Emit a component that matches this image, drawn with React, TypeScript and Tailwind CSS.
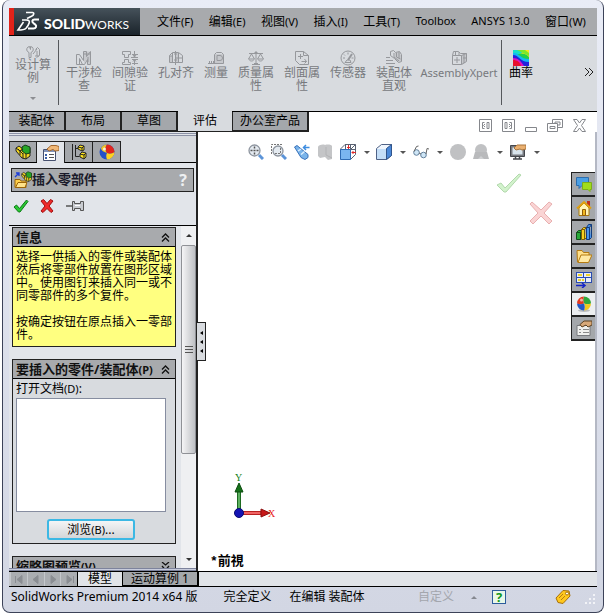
import React from 'react';

const ui = "font-['Noto_Sans','Noto_Sans_CJK_SC',sans-serif]";

type IconProps = { children: React.ReactNode; w?: number; h?: number; className?: string };

function Icon({ children, w = 16, h = 16, className = '' }: IconProps) {
  return (
    <svg width={w} height={h} viewBox={`0 0 ${w} ${h}`} fill="none" className={`shrink-0 ${className}`} aria-hidden="true">
      {children}
    </svg>
  );
}

function Accel({ k }: { k: string }) {
  return <span className="text-[11px]">({k})</span>;
}

const menus = [
  { label: '文件', k: 'F' },
  { label: '编辑', k: 'E' },
  { label: '视图', k: 'V' },
  { label: '插入', k: 'I' },
  { label: '工具', k: 'T' },
  { label: 'Toolbox' },
  { label: 'ANSYS 13.0' },
  { label: '窗口', k: 'W' },
];

function Logo() {
  return (
    <div className="flex w-[131px] shrink-0 items-center border-l-[5px] border-[#e2231a] bg-linear-to-b from-[#46525b] to-[#1b242b]">
      <svg width="126" height="27" viewBox="0 0 126 27" fill="none" role="img" aria-label="SolidWorks">
        <path d="M12 4.500h6.500c2 0 1.500 2.800-.5 3.500l-5 2.500M8 12h4.500c5 0 2.500 4.500-.5 8.200-1.200 1.200-4.500 1.800-8 1.800l5.500-8" stroke="#fff" strokeWidth="1.600" />
        <path d="M25 11.500h-4.500c-2.500 0-2.800 2.300-1.200 3.500l2 1.600c1.700 1.500.7 3.800-1.800 3.800H14" stroke="#fff" strokeWidth="2" />
        <text x="30" y="21" fill="#fff" fontSize="14" fontFamily="Lato, sans-serif" fontWeight="900">SOLID</text>
        <text x="71" y="21" fill="#fff" fontSize="12" fontFamily="Lato, sans-serif">WORKS</text>
      </svg>
    </div>
  );
}

function MenuBar() {
  return (
    <header className="flex h-7 border-b border-black bg-[#a8aaad]">
      <Logo />
      <nav className="flex flex-1 items-center justify-between pr-[11px] pl-[17px] text-xs">
        {menus.map((m) => (
          <button key={m.label} className={`whitespace-nowrap ${m.k ? '' : 'text-[11px]'}`}>
            {m.label}
            {m.k && <Accel k={m.k} />}
          </button>
        ))}
      </nav>
    </header>
  );
}

const g = '#96989c';
const f = '#c6c8cc';

const tools = [
  {
    label: '干涉检查',
    width: 'w-[46px]',
    icon: (
      <>
        <path d="M8 1.500h6v13h-3v-5l-3 4z" fill={f} />
        <path d="M.5 4.500h3l4 6v-9h3v5l4-5v13h-3v-5l-3 5h-2M.5 4.500v10h3v-6l3 6M1 14.500h6M8 4h7M12 7v5" stroke={g} />
      </>
    ),
  },
  {
    label: '间隙验证',
    width: 'w-[46px]',
    icon: <path d="M.5 1.500h8v3h-2v3h-4v-3h-2zM2.500 9.500h4v3h2v2h-8v-2h2zM9 7.500h7M10 9.500h6M12.500 1v6M11 5l1.500 2L14 5M12.500 15V9M11 11.500l1.500-2 1.500 2M10 4.500h6M10 13.500h6" stroke={g} />,
  },
  {
    label: '孔对齐',
    width: 'w-[46px]',
    icon: (
      <>
        <path d="M2 6h3v7H2zM8 3h3v10H8z" fill={f} />
        <path d="M1.500 12.500v-7l3-3h6l4 3v7zM4.500 3v9M7.500 1v14M10.500 3v9M1.500 6h3M7.500 8h7M6 4h3M6 10h3" stroke={g} />
      </>
    ),
  },
  {
    label: '测量',
    width: 'w-[34px]',
    icon: (
      <>
        <path d="M7 4h8v9H7z" fill={f} />
        <path d="M6.500 13.500v-9l2-2h5l2 2v9zM0 13.500h7M1.500 11v2M3.500 11v2M5.500 11v2M9 5.500h3a1.500 1.500 0 0 1 0 5H9z" stroke={g} />
      </>
    ),
  },
  {
    label: '质量属性',
    width: 'w-[46px]',
    icon: <path d="M8 1v13M1 3.500h14M3.500 4l-3 5h6zM12.500 4l-3 5h6zM4 14.500h8M1 9.500c1 2 4 2 5 0M10 9.500c1 2 4 2 5 0M6.500 2.500h3M6 13.500h4" stroke={g} />,
  },
  {
    label: '剖面属性',
    width: 'w-[46px]',
    icon: <path d="M1.500 1.500h8l5 4v9h-9l-4-4zM9.500 1.500v4h5M4 6.500h5M6.500 4v5M7.500 11.500h5M10.500 9l2 2.500-2 2" stroke={g} />,
  },
  {
    label: '传感器',
    width: 'w-[46px]',
    icon: (
      <>
        <circle cx="8" cy="8" r="7" stroke={g} />
        <path d="M8 10l4-6" stroke={g} strokeWidth="2" />
        <path d="M3 8h2M8 2.500v2M4 4.500l1 1M11.500 8h2M5 12.500l2-2.500h3l1 2.500z" stroke={g} />
      </>
    ),
  },
  {
    label: '装配体直观',
    width: 'w-[46px]',
    icon: (
      <>
        <path d="M9 3l4-1 2 3v6l-3 1-3-4z" fill={f} />
        <path d="M4.500 1.500l3-1 2 2 4-1 2 3v7l-3 1-4-4-4-3zM8 3v4l5 4M10.500 3v4l4 2M13 2v6M0 7.500h4M0 10.500h7M0 13.500h9" stroke={g} />
      </>
    ),
  },
  {
    label: 'AssemblyXpert',
    width: 'w-[84px]',
    icon: (
      <>
        <path d="M11 5l4-1v8l-4 3z" fill={f} />
        <path d="M1.500 5.500h9v9h-9zM1.500 5.500l1-4h5l2 2h6v8l-5 3M8 2v3M10.500 5.500l5-2M12 8h3M6 7v6M3 10h6M4.500 2v3M13 5v8" stroke={g} />
      </>
    ),
  },
];

function Ribbon() {
  return (
    <section className="flex h-[75px] bg-[#d8dbdf] text-xs leading-[13px] text-[#77797d]">
      <button className="flex w-[49px] flex-col items-center pt-[9px] pr-px">
        <Icon h={13}>
          <path d="M4.500 1.500a3 3 0 0 0-2 5l1.500 1v5h2v-5l1.500-1a3 3 0 0 0-2-5v3zM10.500 4.500l2-2 2 2v6l-3 2M8 9l4-5M10 11h4M12 6v5" stroke={g} />
        </Icon>
        <span className="w-9">设计算例</span>
        <span className="mt-[13px] border-x-[3px] border-t-[3px] border-x-transparent border-t-[#8c8e92]" />
      </button>
      <div className="mt-1 h-[65px] w-px bg-[#55585c]" />
      <div className="flex flex-1 pl-0.5">
        {tools.map((t) => (
          <button key={t.label} className={`flex shrink-0 flex-col items-center pt-[14px] ${t.width}`}>
            <Icon>{t.icon}</Icon>
            <span className={t.label === 'AssemblyXpert' ? 'text-[11px]' : 'max-w-9'}>{t.label}</span>
          </button>
        ))}
        <div className="mt-1 h-[65px] w-px shrink-0 bg-[#55585c]" />
        <button className="flex w-[38px] shrink-0 flex-col items-center pt-[14px] text-black">
          <Icon>
            <path d="M0 0h16v16H0z" fill="#22d04a" />
            <path d="M0 0h16v7C11 1 7 6 0 0z" fill="#ffe81a" />
            <path d="M0 0h10c0 3-3 5-10 4z" fill="#18e0c8" />
            <path d="M4 0h8l4 3v3L8 2z" fill="#7de82c" />
            <path d="M0 3c6-1 7 6 16 6v4C7 13 7 6 0 7z" fill="#12b8f4" />
            <path d="M0 5c6 0 7 7 16 7v4H9C8 11 5 8 0 9z" fill="#2422dc" />
            <path d="M0 8c5 0 8 3 11 8H7C6 13 4 11 0 11z" fill="#e010c0" />
            <path d="M0 10c4 0 7 2 8 6H0z" fill="#e8102c" />
          </Icon>
          <span>曲率</span>
        </button>
        <button className="mr-0.5 mb-2 ml-auto pt-1" aria-label="更多">
          <Icon w={12}>
            <path d="M2 4l4 4-4 4M6 4l4 4-4 4" stroke="#222" />
          </Icon>
        </button>
      </div>
    </section>
  );
}

function TabRow() {
  const tab = 'h-5 border-r-2 border-b-2 border-[#222] bg-[#a4a7ab]';
  return (
    <div className="flex h-[21px] justify-between border-t border-black bg-white text-xs leading-4">
      <div className="flex">
        <button className={`w-[57px] ${tab}`}>装配体</button>
        <button className={`w-14 ${tab}`}>布局</button>
        <button className={`w-14 ${tab}`}>草图</button>
        <button className="-mt-px h-[22px] w-[54px] border-b-2 border-[#222] bg-[#d8dbdf]">评估</button>
        <button className={`w-[77px] border-l ${tab}`}>办公室产品</button>
      </div>
      <div className="flex items-end gap-[10px] pr-[11px]">
        <button aria-label="展开左侧">
          <Icon w={13} h={13}>
            <path d="M.5.5h12v12H.5zM5.500 3.500h-2v6h2M8 3.500h2v6H8zM6 5L4.500 6.500 6 8" stroke="#85878c" />
          </Icon>
        </button>
        <button aria-label="展开右侧">
          <Icon w={13} h={13}>
            <path d="M.5.5h12v12H.5zM3 3.500h2v6H3zM7.500 3.500h2v6h-2M7 5l1.500 1.500L7 8" stroke="#85878c" />
          </Icon>
        </button>
        <button aria-label="最小化">
          <Icon w={12} h={13}>
            <path d="M.5 8.500h11v4H.5z" stroke="#85878c" />
          </Icon>
        </button>
        <button aria-label="还原">
          <Icon w={16} h={13}>
            <path d="M.5 4.500h10v8H.5zM3 7.500h5v2H3zM5.500 4V.5h10v8H11M8 4V3h5v3h-2" stroke="#85878c" />
          </Icon>
        </button>
        <button aria-label="关闭">
          <Icon w={13} h={13}>
            <path d="M.5.5H4l2.500 3.500L9 .5h3.500L8.500 6.500l4 6H9L6.500 9 4 12.500H.5l4-6z" stroke="#85878c" />
          </Icon>
        </button>
      </div>
    </div>
  );
}

function PartIcon() {
  return (
    <>
      <path d="M1 4l3-2 4 3 2-2 5 1v8l-4 3-4-1-6-7z" fill="#f4d820" stroke="#222" />
      <path d="M7 3l3-2 5 2v6l-4 1-4-3z" fill="#27a527" stroke="#153d15" />
      <path d="M1 4l4 3v4M5 7l3-2M8 9v5M11 10v5M3 5l5 5" stroke="#222" />
    </>
  );
}

function Chevrons({ down = false }: { down?: boolean }) {
  return (
    <Icon w={9} h={9}>
      {down ? <path d="M1 0l3.500 3L8 0M1 4l3.500 4L8 4" stroke="#111" strokeWidth="1.300" /> : <path d="M1 4.500L4.500 1 8 4.500M1 8.500L4.500 5 8 8.500" stroke="#111" strokeWidth="1.300" />}
    </Icon>
  );
}

function GroupHeader({ title, k, down }: { title: string; k?: string; down?: boolean }) {
  return (
    <button className="flex h-[19px] w-full shrink-0 items-center justify-between border-b border-black bg-[#a8aaad] pr-[5px] pl-[3px] text-left text-[13px] leading-[18px] font-bold text-[#111]">
      <span>
        {title}
        {k && <span className="text-[11px]">({k})</span>}
      </span>
      <Chevrons down={down} />
    </button>
  );
}

function PropertyManager() {
  const tab = 'flex h-[21px] w-7 items-center justify-center border-t border-r border-[#222]';
  return (
    <aside className="relative z-10 flex w-[189px] shrink-0 flex-col border-r-2 border-[#222] bg-[#e2e5ea]">
      <div className="mt-px h-[3px] border-y border-[#8c92a6] bg-[#e2e5ea]" />
      <div className="flex h-[27px] items-end border-b border-black bg-[#d8dbdf]">
        <button className={`${tab} border-l bg-[#a4a7ab]`} aria-label="设计树">
          <Icon>
            <PartIcon />
          </Icon>
        </button>
        <button className={`${tab} -mb-px h-[22px] bg-[#e2e5ea]`} aria-label="属性">
          <Icon>
            <path d="M.5 4.500h12v11H.5z" fill="#fff" stroke="#46506e" />
            <path d="M1 5h11v2H1z" fill="#8092b8" />
            <path d="M2 9h2v2H2zM2 12h2v2H2z" fill="#3a60a8" />
            <path d="M6 9.500h5M6 12.500h5" stroke="#555" />
            <path d="M4 4l4-3.500h5l3 1v4l-4 .5-2-1.500-4 1.500z" fill="#f0b878" stroke="#a46a30" />
          </Icon>
        </button>
        <button className={`${tab} bg-[#a4a7ab]`} aria-label="配置">
          <Icon>
            <path d="M1.500 0v16M4.500 1v11.500M4.500 4.500H8M4.500 12.500h4" stroke="#222" />
            <path d="M7 3l2-2 4 1v4l-2 1-4-2z" fill="#ffe420" stroke="#222" />
            <path d="M9 10l2-2 4 1v4l-2 2-4-2z" fill="#ffe420" stroke="#222" />
            <path d="M7 3l4 1v3M11 4l2-2M9 10l4 1v4M13 11l2-2" stroke="#222" />
          </Icon>
        </button>
        <button className={`${tab} bg-[#a4a7ab]`} aria-label="外观">
          <Icon>
            <circle cx="8" cy="8" r="7.500" fill="#2450c8" />
            <path d="M8 9C4 8 2 6 2 4a7.500 7.500 0 0 1 6-3.500C6 3 6 6 8 9z" fill="#f0c428" />
            <path d="M8 9C6 6 6 3 8 .5A7.500 7.500 0 0 1 15.500 8C13 10 10 10 8 9z" fill="#e0261c" />
            <path d="M8 9c2 1 5 1 7.500-1A7.500 7.500 0 0 1 8 15.500C7 13 7 11 8 9z" fill="#ffd21f" />
            <circle cx="5.500" cy="5" r="1.500" fill="#fff" opacity=".8" />
          </Icon>
        </button>
      </div>

      <div className="mx-0.5 mt-[5px] flex h-6 items-center border border-[#222] bg-[#a8aaad] pr-1.5 pl-0.5">
        <Icon w={18} h={18}>
          <g transform="translate(7 0) scale(.7)">
            <PartIcon />
          </g>
          <path d="M1 6l4-4M2 2h3v3" stroke="#1f3fd8" strokeWidth="1.300" />
          <path d="M1 8.500h5l1 1.500h5v6.500H1z" fill="#ffcf4a" stroke="#9a6408" />
          <path d="M1.500 16.500L4 11.500h9l-2 5z" fill="#ffe28a" stroke="#9a6408" />
        </Icon>
        <h2 className="flex-1 text-[13px] font-bold text-[#1b1b2a]">插入零部件</h2>
        <button className="font-['Open_Sans',sans-serif] text-base leading-4 font-bold text-[#eef0f2]" aria-label="帮助">
          ?
        </button>
      </div>

      <div className="flex h-[34px] items-center gap-[10px] border-b border-black pb-1.5 pl-1">
        <button aria-label="确定">
          <Icon>
            <path d="M1 9l2.500-2 3 3.500L13.500 2l1.500 1.500L7 14H5.500z" fill="#2ac832" stroke="#0d7a16" />
          </Icon>
        </button>
        <button aria-label="取消">
          <Icon>
            <path d="M2 3l2.500-1.500L8 5.500l3.500-4L14 3l-4 5 4 5-2 1.500-4-4-4 4L2 13l4-5z" fill="#f02a2a" stroke="#a00c0c" />
          </Icon>
        </button>
        <button aria-label="保持可见">
          <Icon w={20}>
            <path d="M1 8h7" stroke="#555" strokeWidth="1.500" />
            <path d="M7.500 3.500h2v2h6v-2h3v9h-3v-2h-6v2h-2z" fill="#c8cbd0" stroke="#555" />
            <path d="M10 7.500h5" stroke="#fff" />
          </Icon>
        </button>
      </div>

      <div className="flex min-h-0 flex-1">
        <div className="mt-px flex min-w-0 flex-1 flex-col gap-3 overflow-hidden pl-[3px]">
          <section className="shrink-0 border border-[#222] bg-[#ffff80]">
            <GroupHeader title="信息" />
            <div className="space-y-[13px] pt-[3px] pb-[5px] pl-[3px] text-xs leading-[13px]">
              <p>选择一供插入的零件或装配体然后将零部件放置在图形区域中。使用图钉来插入同一或不同零部件的多个复件。</p>
              <p>按确定按钮在原点插入一零部件。</p>
            </div>
          </section>

          <section className="flex shrink-0 flex-col border border-[#222] bg-[#d8dbdf]">
            <GroupHeader title="要插入的零件/装配体" k="P" />
            <label htmlFor="open-docs" className="h-[19px] pl-[3px] text-xs leading-[19px]">
              打开文档
              <Accel k="D" />:
            </label>
            <select id="open-docs" size={6} className="ml-[3px] h-[114px] w-[150px] appearance-none border border-[#868da0] bg-white" />
            <button className="mt-[7px] mb-[3px] ml-[34px] h-[21px] w-[88px] rounded-[3px] border-2 border-[#3cb8e4] bg-linear-to-b from-[#f4f5f6] to-[#d4d6d9] text-xs leading-[17px]">
              浏览
              <Accel k="B" />
              ...
            </button>
          </section>

          <section className="shrink-0 border border-[#222] bg-[#d8dbdf]">
            <GroupHeader title="缩略图预览" k="V" down />
          </section>
        </div>
        <div className="ml-[5px] flex w-[15px] shrink-0 flex-col items-center bg-[#eff0f2]">
          <button className="flex h-[19px] items-center" aria-label="向上滚动">
            <span className="border-x-[3px] border-b-[3px] border-x-transparent border-b-[#333]" />
          </button>
          <div className="flex h-[209px] w-full flex-col items-center justify-center gap-0.5 rounded-xs border border-[#8f9196] bg-linear-to-r from-[#f5f5f6] to-[#bfc1c5]">
            <span className="h-px w-2 bg-[#555]" />
            <span className="h-px w-2 bg-[#555]" />
            <span className="h-px w-2 bg-[#555]" />
          </div>
          <button className="mt-auto flex h-[18px] items-center" aria-label="向下滚动">
            <span className="border-x-[3px] border-t-[3px] border-x-transparent border-t-[#333]" />
          </button>
        </div>
      </div>
      <div className="h-[3px] border-y border-[#7d839c] bg-[#c8ccdc]" />

      {/* 折叠手柄 */}
      <button className="absolute top-[190px] -right-[10px] flex h-[39px] w-[9px] flex-col items-center justify-center gap-[5px] border border-l-0 border-[#222] bg-[#d8dbdf]" aria-label="折叠面板">
        <span className="border-y-[2px] border-r-[3px] border-y-transparent border-r-black" />
        <span className="border-y-[2px] border-r-[3px] border-y-transparent border-r-black" />
        <span className="border-y-[2px] border-r-[3px] border-y-transparent border-r-black" />
      </button>
    </aside>
  );
}

function Caret() {
  return <span className="border-x-[3px] border-t-[3px] border-x-transparent border-t-[#555]" />;
}

function ViewToolbar() {
  return (
    <div className="flex items-center justify-between pt-3 pr-[55px] pl-[50px]">
      <button aria-label="整屏显示全图">
        <Icon>
          <circle cx="6.500" cy="6.500" r="5.500" fill="#e4eaf0" stroke="#8e959f" strokeWidth="1.300" />
          <path d="M6.500 2.500v2M6.500 8.500v2M2.500 6.500h2M8.500 6.500h2M5.500 6.500h2" stroke="#555" strokeWidth="1.500" />
          <path d="M11 11l4 4" stroke="#5c94d8" strokeWidth="3" />
        </Icon>
      </button>
      <button aria-label="局部放大">
        <Icon>
          <path d="M.5 10V.5H11" stroke="#777" strokeDasharray="2 1" />
          <circle cx="7" cy="7" r="5" fill="#e4eaf0" stroke="#8e959f" strokeWidth="1.300" />
          <path d="M4 9.500h5.500V4" stroke="#777" strokeDasharray="2 1" />
          <path d="M11 11l4 4" stroke="#5c94d8" strokeWidth="3" />
        </Icon>
      </button>
      <button aria-label="上一视图">
        <Icon>
          <path d="M.5 3L3 1.500l11 9v3L11 15.500l-4-2z" fill="#7ab4ea" stroke="#3a72ba" />
          <path d="M4 7l3-2M7 10.500l3.500-3" stroke="#dff0ff" strokeWidth="1.500" />
          <path d="M15.500 3.500H10M12 1L9.500 3.500 12 6" stroke="#3d8ce0" strokeWidth="1.500" />
        </Icon>
      </button>
      <button aria-label="剖面视图">
        <Icon>
          <path d="M1 3c0-2 5-3 7-2 3-1 7 0 7 1v13l-4 1-3-3-5 1-2-2z" fill="#c4c5c7" />
          <path d="M9 3v8l6 3" stroke="#b2b3b5" />
        </Icon>
      </button>
      <button className="flex items-center gap-[8px]" aria-label="视图定向">
        <Icon>
          <path d="M5 .5h10.500v10L11 15H.5V5z" fill="#fff" stroke="#5a6272" />
          <path d="M.5 5.500h10v10H.5z" fill="#7ab6f0" stroke="#2f6cb4" />
          <path d="M10.500 5.500l5-5M5.500 0v5M10.500.5v5M11 5.500h5" stroke="#5a6272" />
          <path d="M8.500 1v4M7 3.500h3M12 8.500h4M13.500 7l-1.500 1.500 1.500 1.500" stroke="#e02a2a" />
        </Icon>
        <Caret />
      </button>
      <button className="flex items-center gap-[8px]" aria-label="显示样式">
        <Icon>
          <path d="M.5 4.500l5-4h10v11l-5 4H.5z" fill="#f0f6fd" stroke="#4f6286" />
          <path d="M10.500 4.500l5-4v11l-5 4z" fill="#4a88d8" stroke="#31558c" />
          <path d="M1 5h9v10H1z" fill="#c4def8" />
        </Icon>
        <Caret />
      </button>
      <button className="flex items-center gap-[8px]" aria-label="隐藏/显示项目">
        <Icon>
          <circle cx="3.500" cy="8.500" r="2.800" fill="#cfe6f6" stroke="#63809c" />
          <circle cx="10.500" cy="11" r="2.800" fill="#cfe6f6" stroke="#63809c" />
          <path d="M1 7.500l2.500-5 2-.5M13 10l1-5.500 2 .5M6 9l2 1" stroke="#666" />
        </Icon>
        <Caret />
      </button>
      <button aria-label="编辑外观">
        <Icon>
          <circle cx="8" cy="8" r="8" fill="#c0c1c3" />
        </Icon>
      </button>
      <button className="flex items-center gap-[8px]" aria-label="应用布景">
        <Icon>
          <circle cx="8" cy="6" r="6" fill="#c0c1c3" />
          <path d="M2 8h12l2 7H0z" fill="#b9babc" />
          <path d="M5 15l3-3 3 3z" fill="#d0d1d3" />
        </Icon>
        <Caret />
      </button>
      <button className="flex items-center gap-[8px]" aria-label="视图设定">
        <Icon>
          <path d="M.5 1.500h14v11H.5z" fill="#77797f" stroke="#44474c" />
          <path d="M2.500 3.500h10v7h-10z" fill="#d8e4ec" />
          <path d="M4 4l3-3h9v4l-4 1-2-1-4 1z" fill="#eab070" stroke="#a8743c" />
          <path d="M5.500 12.500v2M9.500 12.500v2M3 15h9" stroke="#44474c" strokeWidth="1.500" />
        </Icon>
        <Caret />
      </button>
    </div>
  );
}

const paneTabs = [
  {
    label: '论坛',
    icon: (
      <>
        <path d="M.5 1.500h12v8H6l-3 3v-3H.500z" fill="#4a9fe4" stroke="#2c6cac" />
        <path d="M6.500 6.500h9v7h-1.500v2l-2-2H6.500z" fill="#a0dc1c" stroke="#7cae18" />
      </>
    ),
  },
  {
    label: '资源',
    icon: (
      <>
        <path d="M11 1h3v6h-3z" fill="#c03020" />
        <path d="M3 8v7.500h10V8L8 3z" fill="#fff4b8" stroke="#a8780c" />
        <path d="M1 8.500L8 2l7 6.500" stroke="#e0a010" strokeWidth="2" />
        <path d="M6.500 9.500h3v6h-3z" fill="#f0b820" stroke="#905c08" />
      </>
    ),
  },
  {
    label: '设计库',
    icon: (
      <>
        <path d="M.5 8.500h4v7h-4zM.5 8.500l2-2h4l-2 2M4.500 15.500l2-2v-7" fill="#28a838" stroke="#124c1a" />
        <path d="M5.500 5.500h3v10h-3zM5.500 5.500l2-2h3l-2 2M8.500 15.500l2-2v-10" fill="#f4d020" stroke="#7a5c08" />
        <path d="M10.500 3.500h3v12h-3zM10.500 3.500l2-3h3l-2 3M13.500 15.500l2-2V.5" fill="#4a94ea" stroke="#123c7c" />
      </>
    ),
  },
  {
    label: '文件探索器',
    icon: (
      <>
        <path d="M1 2.500h5l1.500 2H13V7l-2 7H1.500z" fill="#ffe08a" stroke="#b47a10" />
        <path d="M2 14.500L5 7h11l-3.500 7.500z" fill="#ffe9a4" stroke="#b47a10" />
      </>
    ),
  },
  {
    label: '视图调色板',
    icon: (
      <>
        <path d="M0 0h16v11H0z" fill="#2a4cb0" />
        <path d="M1 1h6v4H1zM8 1h7v4H8zM10 6h5v4h-5zM1 6h8v4H1z" fill="#e8ecf6" />
        <path d="M2 2h4v2H2zM10 2h4v2h-4zM2 7h3v2H2zM6 7h2v2H6z" fill="#f0d428" />
        <path d="M0 13.500h8M6 11l3 2.500L6 16" stroke="#1424c8" strokeWidth="1.500" />
      </>
    ),
  },
  {
    label: '外观',
    active: true,
    icon: (
      <>
        <ellipse cx="8" cy="14.500" rx="6" ry="1.500" fill="#b8babd" />
        <path d="M8 7.500C7 5 7 2 8 .5a7 7 0 0 1 7 7C13 8.500 10 8.500 8 7.500z" fill="#30a83c" />
        <path d="M8 7.500C7 5 7 2 8 .5a7 7 0 0 0-7 7c2 1 5 1 7 0z" fill="#e43a20" />
        <path d="M8 7.500c2 1 5 1 7 0a7 7 0 0 1-7 7c1-2 1-5 0-7z" fill="#f2c81c" />
        <path d="M8 7.500c-2 1-5 1-7 0a7 7 0 0 0 7 7c1-2 1-5 0-7z" fill="#2458c4" />
        <circle cx="5.500" cy="4" r="1.500" fill="#fff" opacity=".6" />
      </>
    ),
  },
  {
    label: '自定义属性',
    icon: (
      <>
        <path d="M1 5.500h13v10H1z" fill="#f0f0ee" stroke="#77797d" />
        <path d="M3 9.500h2M3 12.500h2M7 9.500h6M7 12.500h6" stroke="#888" />
        <path d="M4 4.500L8 1h8v4l-4 2-2-2-4 2z" fill="#d8a878" stroke="#5c4020" />
      </>
    ),
  },
];

function Viewport() {
  return (
    <main className="relative flex min-w-0 flex-1 flex-col border-r-2 border-[#b4b8c4] bg-white">
      <ViewToolbar />
      <div className="mt-3 flex justify-end">
        <div className="flex gap-[7px] pr-[18px]">
          <button className="self-start" aria-label="确认">
            <Icon w={26} h={22}>
              <path d="M1 13l4-2 4 5L23 2l2 1L10 20H8z" fill="#d2f2cc" stroke="#b2d8ac" />
            </Icon>
          </button>
          <button className="mt-[29px] self-start" aria-label="取消">
            <Icon w={24} h={24}>
              <path d="M1 3l2-2 9 8 8-8 3 2-8 9 8 8-3 3-8-8-8 8-3-3 8-8z" fill="#fad4d4" stroke="#e8b0b0" />
            </Icon>
          </button>
        </div>
        <nav className="flex w-6 flex-col border-t border-l border-[#222]">
          {paneTabs.map((t) => (
            <button key={t.label} aria-label={t.label} className={`flex h-6 items-center justify-center border-b-2 border-[#222] ${t.active ? 'bg-[#eceef0]' : 'bg-[#a4a7ab]'}`}>
              <Icon>{t.icon}</Icon>
            </button>
          ))}
        </nav>
      </div>

      {/* 坐标系 */}
      <svg className="absolute bottom-[50px] left-[34px]" width="44" height="48" viewBox="0 0 44 48" role="img" aria-label="坐标系">
        <path d="M5.500 18h3v20h-3z" fill="#5cb060" stroke="#1c6a20" />
        <path d="M7 10l4 9H3z" fill="#147018" stroke="#0c4c10" />
        <path d="M10 38.500h19v3H10z" fill="#f06464" stroke="#b82020" />
        <path d="M38 40l-9-4v8z" fill="#c81818" stroke="#8c1010" />
        <circle cx="7" cy="40" r="4.500" fill="#1414b4" stroke="#0a0a70" />
        <text x="3" y="8" fontSize="10" fontFamily="'Liberation Serif', serif" fill="#108018">Y</text>
        <text x="36" y="44" fontSize="10" fontFamily="'Liberation Serif', serif" fill="#e82020">X</text>
      </svg>
      <span className="absolute bottom-0 left-3 font-['Liberation_Mono','Noto_Sans_CJK_SC',monospace] text-[13px] leading-[18px] font-bold">*前視</span>
    </main>
  );
}

const navPaths = ['M4.500 4v7M11 3.500l-5 4 5 4z', 'M10 3.500l-5 4 5 4z', 'M6 3.500l5 4-5 4z', 'M5 3.500l5 4-5 4zM11.500 4v7'];

function ModelTabs() {
  return (
    <div className="flex h-4 border-y border-black bg-[#e1e4e8] text-xs leading-[14px]">
      <div className="flex w-[68px] gap-px bg-[#c4c7cb] pl-0.5">
        {navPaths.map((d) => (
          <button key={d} className="flex w-4 justify-center bg-[#aaadb1]" aria-label="滚动标签">
            <Icon w={15} h={14}>
              <path d={d} fill="#8a8d92" stroke="#8a8d92" />
            </Icon>
          </button>
        ))}
      </div>
      <button className="w-[46px] border-x border-black bg-[#e1e4e8]">模型</button>
      <button className="w-[76px] border-r-2 border-b border-black bg-[#a4a7ab]">运动算例 1</button>
    </div>
  );
}

function StatusBar() {
  return (
    <footer className="flex h-[22px] items-center pb-0.5 pl-0.5 text-xs whitespace-nowrap">
      <span>SolidWorks Premium 2014 x64 版</span>
      <span className="ml-[26px]">完全定义</span>
      <span className="ml-[18px]">在编辑 装配体</span>
      <button className="mr-[15px] ml-auto flex items-center gap-[17px] text-[#a3a6ad]">
        自定义
        <span className="border-x-[3px] border-b-[3px] border-x-transparent border-b-[#85888f]" />
      </button>
      <button className="flex h-[14px] w-[14px] items-center justify-center border border-[#2c5c9c] bg-[#e8f8e8] text-[13px] leading-none font-bold text-[#10961c]" aria-label="帮助">
        ?
      </button>
      <button className="ml-[49px]" aria-label="标签">
        <Icon>
          <path d="M1 9l7-7.500 6 .5 1 5-7 7.500-5-1z" fill="#ffc81e" stroke="#a8700a" />
          <circle cx="12" cy="4.500" r="1.500" fill="#fff" stroke="#a8700a" />
          <path d="M4 9l4-4M6 11l4-4" stroke="#b87c10" />
        </Icon>
      </button>
      <Icon w={10} h={10} className="mt-1 mr-0.5 ml-[14px]">
        <path d="M8 0h2v2H8zM4 4h2v2H4zM8 4h2v2H8zM0 8h2v2H0zM4 8h2v2H4zM8 8h2v2H8z" fill="#f2f3f7" />
      </Icon>
    </footer>
  );
}

export default function App() {
  return (
    <div className={`h-screen bg-white pr-[1px] pb-[2px] pl-[2px] text-black ${ui}`}>
      <div className="flex h-full flex-col rounded-lg border border-t-0 border-[#3c4258] bg-linear-to-b from-[#e9ecf6] to-[#d2d6e3] px-1.5 pt-2 pb-[3px]">
        <MenuBar />
        <Ribbon />
        <TabRow />
        <div className="flex min-h-0 flex-1">
          <PropertyManager />
          <Viewport />
        </div>
        <ModelTabs />
        <StatusBar />
      </div>
    </div>
  );
}
